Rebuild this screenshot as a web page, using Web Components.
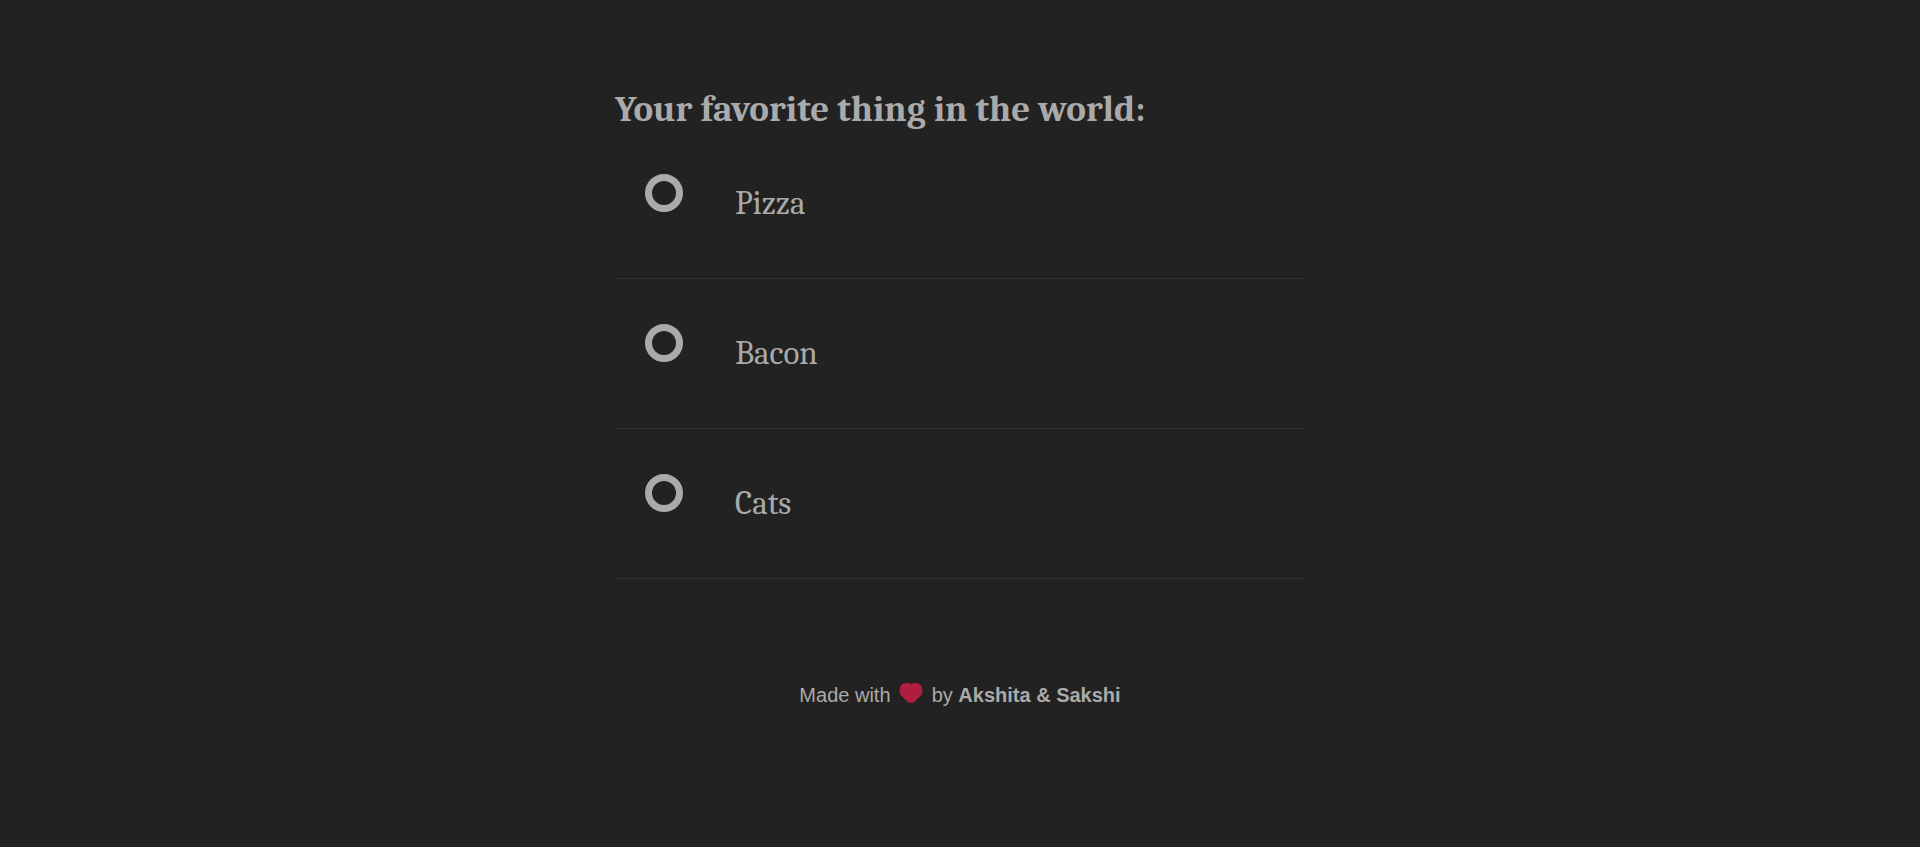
<!DOCTYPE html>
<html lang="en">
<head>
<meta charset="utf-8">
<meta name="viewport" content="width=device-width, initial-scale=1">
<title>Your favorite thing</title>
<style>
  html { background: #222; }
  body { margin: 0; background: #222; color: #aaa; font-family: "Liberation Sans", Arial, sans-serif; }
</style>
</head>
<body>
<favorite-poll>
  <span slot="title">Your favorite thing in the world:</span>
  <poll-option value="pizza">Pizza</poll-option>
  <poll-option value="bacon">Bacon</poll-option>
  <poll-option value="cats">Cats</poll-option>
</favorite-poll>
<page-credit>Akshita &amp; Sakshi</page-credit>

<template id="poll-template">
  <style>
    :host { display: block; box-sizing: border-box; max-width: 690px; margin: 0 auto; padding-top: 89px; font-family: Cambria, Caladea, "Liberation Serif", serif; }
    h2 { margin: 0; font-size: 37px; line-height: 40px; font-weight: 700; }
  </style>
  <h2 id="title"><slot name="title"></slot></h2>
  <div role="radiogroup" aria-labelledby="title"><slot></slot></div>
</template>

<template id="option-template">
  <style>
    :host { display: block; border-bottom: 1px solid #333; }
    label { display: flex; align-items: flex-start; gap: 52px; box-sizing: border-box; height: 149px; padding: 45px 30px 0; cursor: pointer; }
    input { appearance: none; flex: none; box-sizing: border-box; width: 38px; height: 38px; margin: 0; border: 7px solid #aaa; border-radius: 50%; cursor: pointer; }
    input:checked { border-color: #0dff92; background: radial-gradient(#0dff92 50%, transparent 55%); }
    span { padding-top: 9px; font-size: 33px; line-height: 40px; }
  </style>
  <label><input type="radio"><span><slot></slot></span></label>
</template>

<template id="credit-template">
  <style>
    :host { display: block; padding: 100px 0 40px; text-align: center; font-size: 20px; line-height: 32px; }
    svg { display: inline-block; width: 24px; height: 20px; margin: 0 3px; vertical-align: -1px; }
  </style>
  Made with <svg viewBox="0 0 24 20" role="img" aria-label="love"><path d="M7.5 0C9.5 0 11 .4 12 1C13 .4 14.5 0 16.5 0C20.8 0 23.5 3 23.5 7.2C23.5 9.8 22.9 11.4 21.6 12.8L16.6 17.8C13.8 20.7 10.2 20.7 7.4 17.8L2.4 12.8C1.1 11.4 .5 9.8 .5 7.2C.5 3 3.2 0 7.5 0Z" fill="#af1e3e"/></svg> by <b><slot></slot></b>
</template>

<script>
  class TemplateElement extends HTMLElement {
    constructor() {
      super();
      const template = document.getElementById(this.constructor.template);
      this.attachShadow({ mode: "open" }).append(template.content.cloneNode(true));
    }
  }
  class FavoritePoll extends TemplateElement {
    static template = "poll-template";
    connectedCallback() {
      this.addEventListener("option-selected", event => {
        for (const option of this.querySelectorAll("poll-option")) {
          option.checked = option === event.target;
        }
      });
    }
  }
  class PollOption extends TemplateElement {
    static template = "option-template";
    connectedCallback() {
      const input = this.shadowRoot.querySelector("input");
      input.value = this.getAttribute("value");
      input.addEventListener("change", () => {
        this.dispatchEvent(new CustomEvent("option-selected", { bubbles: true }));
      });
    }
    set checked(value) { this.shadowRoot.querySelector("input").checked = value; }
  }
  class PageCredit extends TemplateElement {
    static template = "credit-template";
  }
  customElements.define("favorite-poll", FavoritePoll);
  customElements.define("poll-option", PollOption);
  customElements.define("page-credit", PageCredit);
</script>
</body>
</html>
